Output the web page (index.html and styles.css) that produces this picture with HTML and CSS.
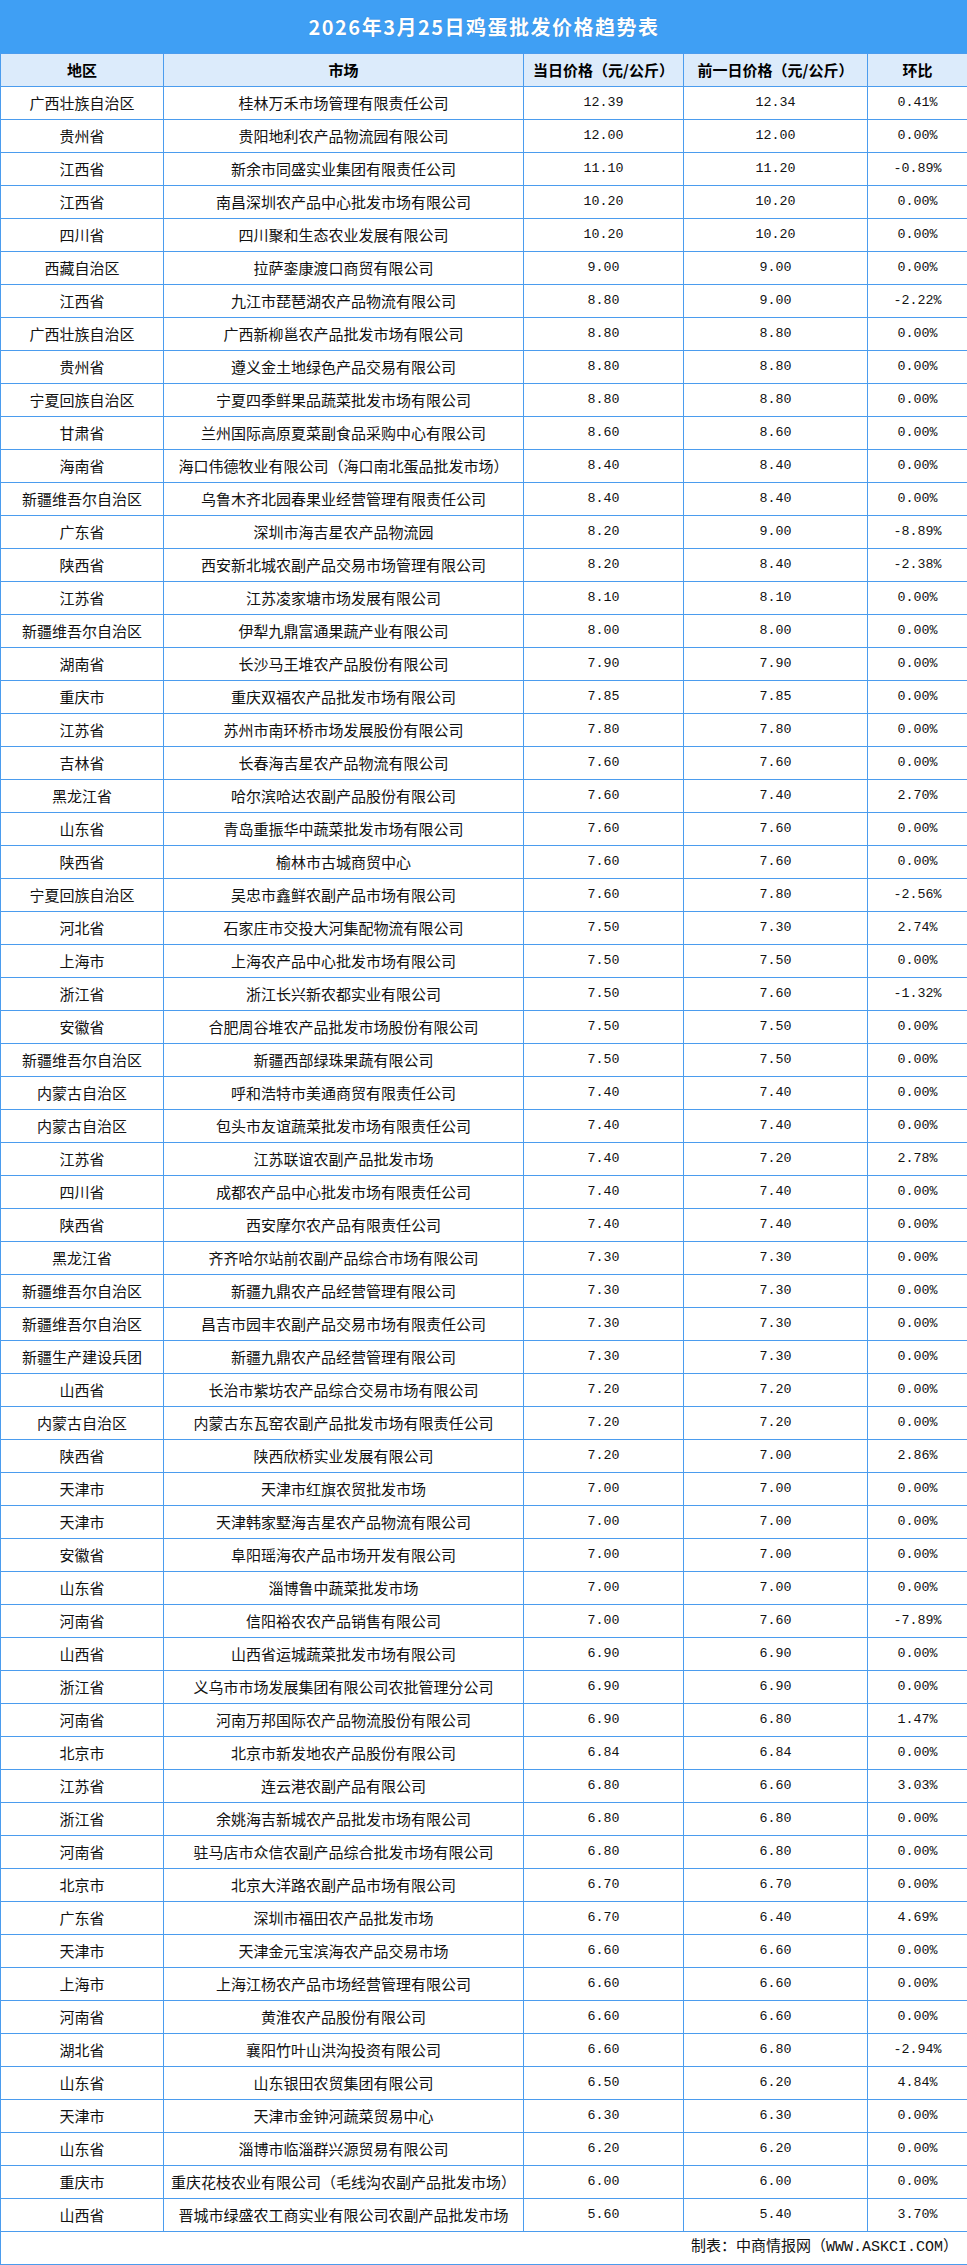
FILE: index.html
```html
<!DOCTYPE html>
<html lang="zh-CN">
<head>
<meta charset="utf-8">
<title>2026年3月25日鸡蛋批发价格趋势表</title>
<link rel="stylesheet" href="styles.css">
</head>
<body>
<table class="price-table">
  <colgroup>
    <col class="c-region"><col class="c-market"><col class="c-today"><col class="c-prev"><col class="c-chg">
  </colgroup>
  <thead>
    <tr class="title-row"><th colspan="5" class="title">2026年3月25日鸡蛋批发价格趋势表</th></tr>
    <tr class="head-row">
      <th>地区</th><th>市场</th><th>当日价格（元/公斤）</th><th>前一日价格（元/公斤）</th><th>环比</th>
    </tr>
  </thead>
  <tbody id="rows">
<tr><td>广西壮族自治区</td><td>桂林万禾市场管理有限责任公司</td><td class="num">12.39</td><td class="num">12.34</td><td class="num">0.41%</td></tr>
<tr><td>贵州省</td><td>贵阳地利农产品物流园有限公司</td><td class="num">12.00</td><td class="num">12.00</td><td class="num">0.00%</td></tr>
<tr><td>江西省</td><td>新余市同盛实业集团有限责任公司</td><td class="num">11.10</td><td class="num">11.20</td><td class="num">-0.89%</td></tr>
<tr><td>江西省</td><td>南昌深圳农产品中心批发市场有限公司</td><td class="num">10.20</td><td class="num">10.20</td><td class="num">0.00%</td></tr>
<tr><td>四川省</td><td>四川聚和生态农业发展有限公司</td><td class="num">10.20</td><td class="num">10.20</td><td class="num">0.00%</td></tr>
<tr><td>西藏自治区</td><td>拉萨銮康渡口商贸有限公司</td><td class="num">9.00</td><td class="num">9.00</td><td class="num">0.00%</td></tr>
<tr><td>江西省</td><td>九江市琵琶湖农产品物流有限公司</td><td class="num">8.80</td><td class="num">9.00</td><td class="num">-2.22%</td></tr>
<tr><td>广西壮族自治区</td><td>广西新柳邕农产品批发市场有限公司</td><td class="num">8.80</td><td class="num">8.80</td><td class="num">0.00%</td></tr>
<tr><td>贵州省</td><td>遵义金土地绿色产品交易有限公司</td><td class="num">8.80</td><td class="num">8.80</td><td class="num">0.00%</td></tr>
<tr><td>宁夏回族自治区</td><td>宁夏四季鲜果品蔬菜批发市场有限公司</td><td class="num">8.80</td><td class="num">8.80</td><td class="num">0.00%</td></tr>
<tr><td>甘肃省</td><td>兰州国际高原夏菜副食品采购中心有限公司</td><td class="num">8.60</td><td class="num">8.60</td><td class="num">0.00%</td></tr>
<tr><td>海南省</td><td>海口伟德牧业有限公司（海口南北蛋品批发市场）</td><td class="num">8.40</td><td class="num">8.40</td><td class="num">0.00%</td></tr>
<tr><td>新疆维吾尔自治区</td><td>乌鲁木齐北园春果业经营管理有限责任公司</td><td class="num">8.40</td><td class="num">8.40</td><td class="num">0.00%</td></tr>
<tr><td>广东省</td><td>深圳市海吉星农产品物流园</td><td class="num">8.20</td><td class="num">9.00</td><td class="num">-8.89%</td></tr>
<tr><td>陕西省</td><td>西安新北城农副产品交易市场管理有限公司</td><td class="num">8.20</td><td class="num">8.40</td><td class="num">-2.38%</td></tr>
<tr><td>江苏省</td><td>江苏凌家塘市场发展有限公司</td><td class="num">8.10</td><td class="num">8.10</td><td class="num">0.00%</td></tr>
<tr><td>新疆维吾尔自治区</td><td>伊犁九鼎富通果蔬产业有限公司</td><td class="num">8.00</td><td class="num">8.00</td><td class="num">0.00%</td></tr>
<tr><td>湖南省</td><td>长沙马王堆农产品股份有限公司</td><td class="num">7.90</td><td class="num">7.90</td><td class="num">0.00%</td></tr>
<tr><td>重庆市</td><td>重庆双福农产品批发市场有限公司</td><td class="num">7.85</td><td class="num">7.85</td><td class="num">0.00%</td></tr>
<tr><td>江苏省</td><td>苏州市南环桥市场发展股份有限公司</td><td class="num">7.80</td><td class="num">7.80</td><td class="num">0.00%</td></tr>
<tr><td>吉林省</td><td>长春海吉星农产品物流有限公司</td><td class="num">7.60</td><td class="num">7.60</td><td class="num">0.00%</td></tr>
<tr><td>黑龙江省</td><td>哈尔滨哈达农副产品股份有限公司</td><td class="num">7.60</td><td class="num">7.40</td><td class="num">2.70%</td></tr>
<tr><td>山东省</td><td>青岛重振华中蔬菜批发市场有限公司</td><td class="num">7.60</td><td class="num">7.60</td><td class="num">0.00%</td></tr>
<tr><td>陕西省</td><td>榆林市古城商贸中心</td><td class="num">7.60</td><td class="num">7.60</td><td class="num">0.00%</td></tr>
<tr><td>宁夏回族自治区</td><td>吴忠市鑫鲜农副产品市场有限公司</td><td class="num">7.60</td><td class="num">7.80</td><td class="num">-2.56%</td></tr>
<tr><td>河北省</td><td>石家庄市交投大河集配物流有限公司</td><td class="num">7.50</td><td class="num">7.30</td><td class="num">2.74%</td></tr>
<tr><td>上海市</td><td>上海农产品中心批发市场有限公司</td><td class="num">7.50</td><td class="num">7.50</td><td class="num">0.00%</td></tr>
<tr><td>浙江省</td><td>浙江长兴新农都实业有限公司</td><td class="num">7.50</td><td class="num">7.60</td><td class="num">-1.32%</td></tr>
<tr><td>安徽省</td><td>合肥周谷堆农产品批发市场股份有限公司</td><td class="num">7.50</td><td class="num">7.50</td><td class="num">0.00%</td></tr>
<tr><td>新疆维吾尔自治区</td><td>新疆西部绿珠果蔬有限公司</td><td class="num">7.50</td><td class="num">7.50</td><td class="num">0.00%</td></tr>
<tr><td>内蒙古自治区</td><td>呼和浩特市美通商贸有限责任公司</td><td class="num">7.40</td><td class="num">7.40</td><td class="num">0.00%</td></tr>
<tr><td>内蒙古自治区</td><td>包头市友谊蔬菜批发市场有限责任公司</td><td class="num">7.40</td><td class="num">7.40</td><td class="num">0.00%</td></tr>
<tr><td>江苏省</td><td>江苏联谊农副产品批发市场</td><td class="num">7.40</td><td class="num">7.20</td><td class="num">2.78%</td></tr>
<tr><td>四川省</td><td>成都农产品中心批发市场有限责任公司</td><td class="num">7.40</td><td class="num">7.40</td><td class="num">0.00%</td></tr>
<tr><td>陕西省</td><td>西安摩尔农产品有限责任公司</td><td class="num">7.40</td><td class="num">7.40</td><td class="num">0.00%</td></tr>
<tr><td>黑龙江省</td><td>齐齐哈尔站前农副产品综合市场有限公司</td><td class="num">7.30</td><td class="num">7.30</td><td class="num">0.00%</td></tr>
<tr><td>新疆维吾尔自治区</td><td>新疆九鼎农产品经营管理有限公司</td><td class="num">7.30</td><td class="num">7.30</td><td class="num">0.00%</td></tr>
<tr><td>新疆维吾尔自治区</td><td>昌吉市园丰农副产品交易市场有限责任公司</td><td class="num">7.30</td><td class="num">7.30</td><td class="num">0.00%</td></tr>
<tr><td>新疆生产建设兵团</td><td>新疆九鼎农产品经营管理有限公司</td><td class="num">7.30</td><td class="num">7.30</td><td class="num">0.00%</td></tr>
<tr><td>山西省</td><td>长治市紫坊农产品综合交易市场有限公司</td><td class="num">7.20</td><td class="num">7.20</td><td class="num">0.00%</td></tr>
<tr><td>内蒙古自治区</td><td>内蒙古东瓦窑农副产品批发市场有限责任公司</td><td class="num">7.20</td><td class="num">7.20</td><td class="num">0.00%</td></tr>
<tr><td>陕西省</td><td>陕西欣桥实业发展有限公司</td><td class="num">7.20</td><td class="num">7.00</td><td class="num">2.86%</td></tr>
<tr><td>天津市</td><td>天津市红旗农贸批发市场</td><td class="num">7.00</td><td class="num">7.00</td><td class="num">0.00%</td></tr>
<tr><td>天津市</td><td>天津韩家墅海吉星农产品物流有限公司</td><td class="num">7.00</td><td class="num">7.00</td><td class="num">0.00%</td></tr>
<tr><td>安徽省</td><td>阜阳瑶海农产品市场开发有限公司</td><td class="num">7.00</td><td class="num">7.00</td><td class="num">0.00%</td></tr>
<tr><td>山东省</td><td>淄博鲁中蔬菜批发市场</td><td class="num">7.00</td><td class="num">7.00</td><td class="num">0.00%</td></tr>
<tr><td>河南省</td><td>信阳裕农农产品销售有限公司</td><td class="num">7.00</td><td class="num">7.60</td><td class="num">-7.89%</td></tr>
<tr><td>山西省</td><td>山西省运城蔬菜批发市场有限公司</td><td class="num">6.90</td><td class="num">6.90</td><td class="num">0.00%</td></tr>
<tr><td>浙江省</td><td>义乌市市场发展集团有限公司农批管理分公司</td><td class="num">6.90</td><td class="num">6.90</td><td class="num">0.00%</td></tr>
<tr><td>河南省</td><td>河南万邦国际农产品物流股份有限公司</td><td class="num">6.90</td><td class="num">6.80</td><td class="num">1.47%</td></tr>
<tr><td>北京市</td><td>北京市新发地农产品股份有限公司</td><td class="num">6.84</td><td class="num">6.84</td><td class="num">0.00%</td></tr>
<tr><td>江苏省</td><td>连云港农副产品有限公司</td><td class="num">6.80</td><td class="num">6.60</td><td class="num">3.03%</td></tr>
<tr><td>浙江省</td><td>余姚海吉新城农产品批发市场有限公司</td><td class="num">6.80</td><td class="num">6.80</td><td class="num">0.00%</td></tr>
<tr><td>河南省</td><td>驻马店市众信农副产品综合批发市场有限公司</td><td class="num">6.80</td><td class="num">6.80</td><td class="num">0.00%</td></tr>
<tr><td>北京市</td><td>北京大洋路农副产品市场有限公司</td><td class="num">6.70</td><td class="num">6.70</td><td class="num">0.00%</td></tr>
<tr><td>广东省</td><td>深圳市福田农产品批发市场</td><td class="num">6.70</td><td class="num">6.40</td><td class="num">4.69%</td></tr>
<tr><td>天津市</td><td>天津金元宝滨海农产品交易市场</td><td class="num">6.60</td><td class="num">6.60</td><td class="num">0.00%</td></tr>
<tr><td>上海市</td><td>上海江杨农产品市场经营管理有限公司</td><td class="num">6.60</td><td class="num">6.60</td><td class="num">0.00%</td></tr>
<tr><td>河南省</td><td>黄淮农产品股份有限公司</td><td class="num">6.60</td><td class="num">6.60</td><td class="num">0.00%</td></tr>
<tr><td>湖北省</td><td>襄阳竹叶山洪沟投资有限公司</td><td class="num">6.60</td><td class="num">6.80</td><td class="num">-2.94%</td></tr>
<tr><td>山东省</td><td>山东银田农贸集团有限公司</td><td class="num">6.50</td><td class="num">6.20</td><td class="num">4.84%</td></tr>
<tr><td>天津市</td><td>天津市金钟河蔬菜贸易中心</td><td class="num">6.30</td><td class="num">6.30</td><td class="num">0.00%</td></tr>
<tr><td>山东省</td><td>淄博市临淄群兴源贸易有限公司</td><td class="num">6.20</td><td class="num">6.20</td><td class="num">0.00%</td></tr>
<tr><td>重庆市</td><td>重庆花枝农业有限公司（毛线沟农副产品批发市场）</td><td class="num">6.00</td><td class="num">6.00</td><td class="num">0.00%</td></tr>
<tr><td>山西省</td><td>晋城市绿盛农工商实业有限公司农副产品批发市场</td><td class="num">5.60</td><td class="num">5.40</td><td class="num">3.70%</td></tr>
  </tbody>
  <tfoot>
    <tr class="foot-row"><td colspan="5" class="source">制表：中商情报网（WWW.ASKCI.COM）</td></tr>
  </tfoot>
</table>
</body>
</html>
```
FILE: styles.css
```css
html, body {
  margin: 0;
  padding: 0;
  background: #ffffff;
}

.price-table {
  width: 967px;
  border-collapse: collapse;
  table-layout: fixed;
  font-family: "Noto Sans CJK SC", "Noto Sans", sans-serif;
  font-size: 15px;
  color: #111111;
}

.c-region { width: 163px; }
.c-market { width: 360px; }
.c-today { width: 160px; }
.c-prev { width: 184px; }
.c-chg { width: 100px; }

.price-table th,
.price-table td {
  border: 1px solid #4b9cee;
  padding: 0;
  text-align: center;
  vertical-align: middle;
  white-space: nowrap;
  overflow: hidden;
  line-height: 20px;
  height: 32px;
  box-sizing: border-box;
}

.title-row th.title {
  height: 53px;
  background: #3f9ff4;
  border-color: #3f9ff4;
  border-bottom-color: #4b9cee;
  color: #ffffff;
  font-family: "Noto Sans CJK SC", sans-serif;
  font-size: 20px;
  font-weight: 700;
  letter-spacing: 1.5px;
  text-shadow: 0 0 1px rgba(0, 40, 100, 0.35);
}

.head-row th {
  height: 33px;
  background: #dcebfb;
  font-weight: 700;
  font-size: 15px;
  color: #000000;
}

.price-table td {
  height: 33px;
}

.price-table td.num {
  font-family: "Liberation Mono", "DejaVu Sans Mono", monospace;
  font-size: 13.33px;
  color: #111111;
}

.foot-row td.source {
  height: 33px;
  text-align: right;
  padding-right: 9px;
  font-family: "Liberation Mono", "Noto Sans CJK SC", monospace;
  font-size: 15px;
  color: #111111;
}
```
